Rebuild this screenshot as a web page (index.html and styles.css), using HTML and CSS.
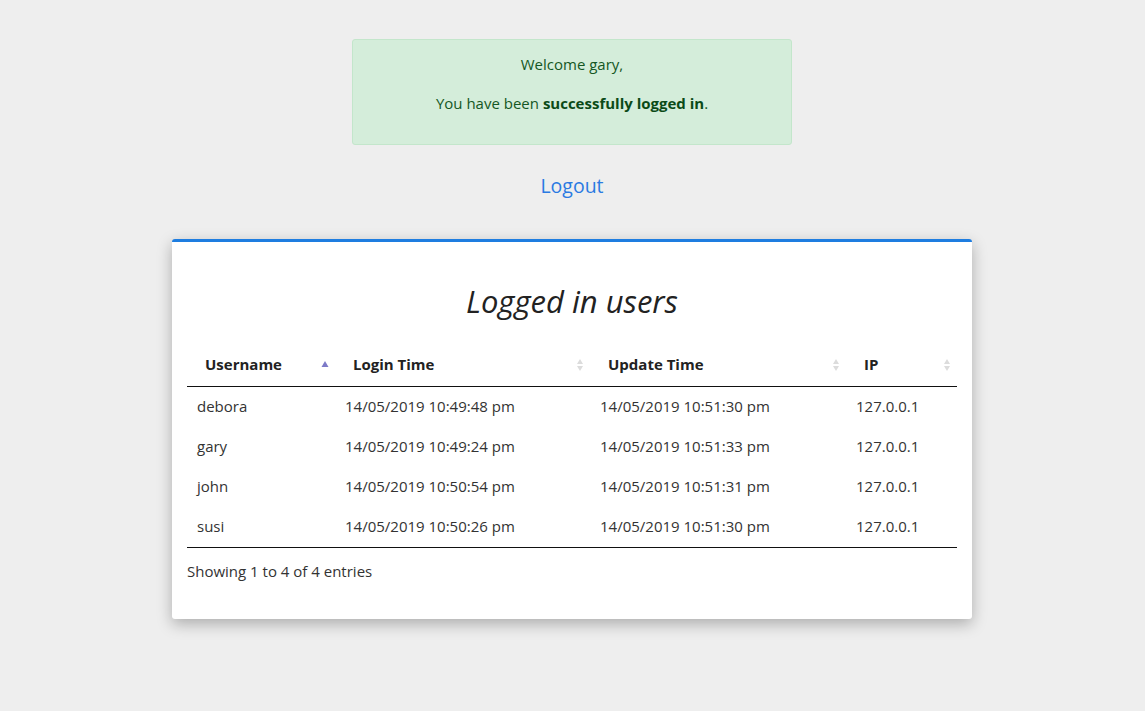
FILE: index.html
```html
<!DOCTYPE html>
<html>
<head>
<meta charset="utf-8">
<link rel="stylesheet" href="styles.css">
</head>
<body>
<div class="page">
  <div class="alert">
    <p>Welcome gary,</p>
    <p>You have been <strong>successfully logged in</strong>.</p>
  </div>
  <a class="logout" href="#">Logout</a>
  <div class="card">
    <h2 class="title">Logged in users</h2>
    <table class="users">
      <colgroup>
        <col class="c1"><col class="c2"><col class="c3"><col class="c4">
      </colgroup>
      <thead>
        <tr>
          <th>Username<svg class="sort" width="8" height="16" viewBox="0 0 8 16"><path d="M4 4 L7.5 10 L0.5 10 Z" fill="#7d7ac8"/></svg></th>
          <th>Login Time<svg class="sort" width="8" height="16" viewBox="0 0 8 16"><path d="M4 2 L7 7 L1 7 Z M4 14 L7 9 L1 9 Z" fill="#dcdcdc"/></svg></th>
          <th>Update Time<svg class="sort" width="8" height="16" viewBox="0 0 8 16"><path d="M4 2 L7 7 L1 7 Z M4 14 L7 9 L1 9 Z" fill="#dcdcdc"/></svg></th>
          <th>IP<svg class="sort" width="8" height="16" viewBox="0 0 8 16"><path d="M4 2 L7 7 L1 7 Z M4 14 L7 9 L1 9 Z" fill="#dcdcdc"/></svg></th>
        </tr>
      </thead>
      <tbody>
        <tr><td>debora</td><td>14/05/2019 10:49:48 pm</td><td>14/05/2019 10:51:30 pm</td><td>127.0.0.1</td></tr>
        <tr><td>gary</td><td>14/05/2019 10:49:24 pm</td><td>14/05/2019 10:51:33 pm</td><td>127.0.0.1</td></tr>
        <tr><td>john</td><td>14/05/2019 10:50:54 pm</td><td>14/05/2019 10:51:31 pm</td><td>127.0.0.1</td></tr>
        <tr><td>susi</td><td>14/05/2019 10:50:26 pm</td><td>14/05/2019 10:51:30 pm</td><td>127.0.0.1</td></tr>
      </tbody>
    </table>
    <div class="info">Showing 1 to 4 of 4 entries</div>
  </div>
</div>
</body>
</html>
```
FILE: styles.css
```css
html, body {
  margin: 0;
  padding: 0;
  background: #eeeeee;
}
body {
  font-family: "Open Sans", "Noto Sans", sans-serif;
  font-size: 15px;
  color: #333;
}
.page {
  display: flex;
  flex-direction: column;
  align-items: center;
  padding: 39px 1px 80px 0;
}
.alert {
  box-sizing: border-box;
  width: 440px;
  background: #d4edda;
  border: 1px solid #c3e6cb;
  border-radius: 3px;
  color: #155724;
  text-align: center;
  padding: 13px 20px 13px;
}
.alert p {
  margin: 0 0 17px;
  line-height: 22px;
}
.alert strong {
  color: #0b4a17;
}
.logout {
  margin-top: 27px;
  margin-bottom: 1px;
  font-size: 19.5px;
  line-height: 28px;
  color: #2a7ae2;
  text-decoration: none;
}
.card {
  box-sizing: border-box;
  width: 800px;
  margin-top: 38px;
  background: #fff;
  border-top: 3px solid #1e7de0;
  border-radius: 3px;
  box-shadow: 0 5px 15px rgba(0, 0, 0, 0.28);
  padding: 0 15px 37px;
}
.title {
  margin: 41px 0 25px;
  font-size: 31px;
  line-height: 36px;
  font-style: italic;
  font-weight: 400;
  color: #222;
  text-align: center;
}
.users {
  width: 100%;
  border-collapse: collapse;
  table-layout: fixed;
}
.c1 { width: 148px; }
.c2 { width: 255px; }
.c3 { width: 256px; }
.c4 { width: 111px; }
.users th {
  text-align: left;
  font-weight: 700;
  color: #222;
  padding: 9px 6px 11px 18px;
  line-height: 22px;
  border-bottom: 1px solid #111;
}
.sort {
  float: right;
  margin-top: 4px;
}
.users td {
  padding: 8px 10px 10px;
  line-height: 22px;
}
.users tbody tr:last-child td {
  border-bottom: 1px solid #111;
}
.info {
  margin-top: 12px;
  line-height: 22px;
}
```
